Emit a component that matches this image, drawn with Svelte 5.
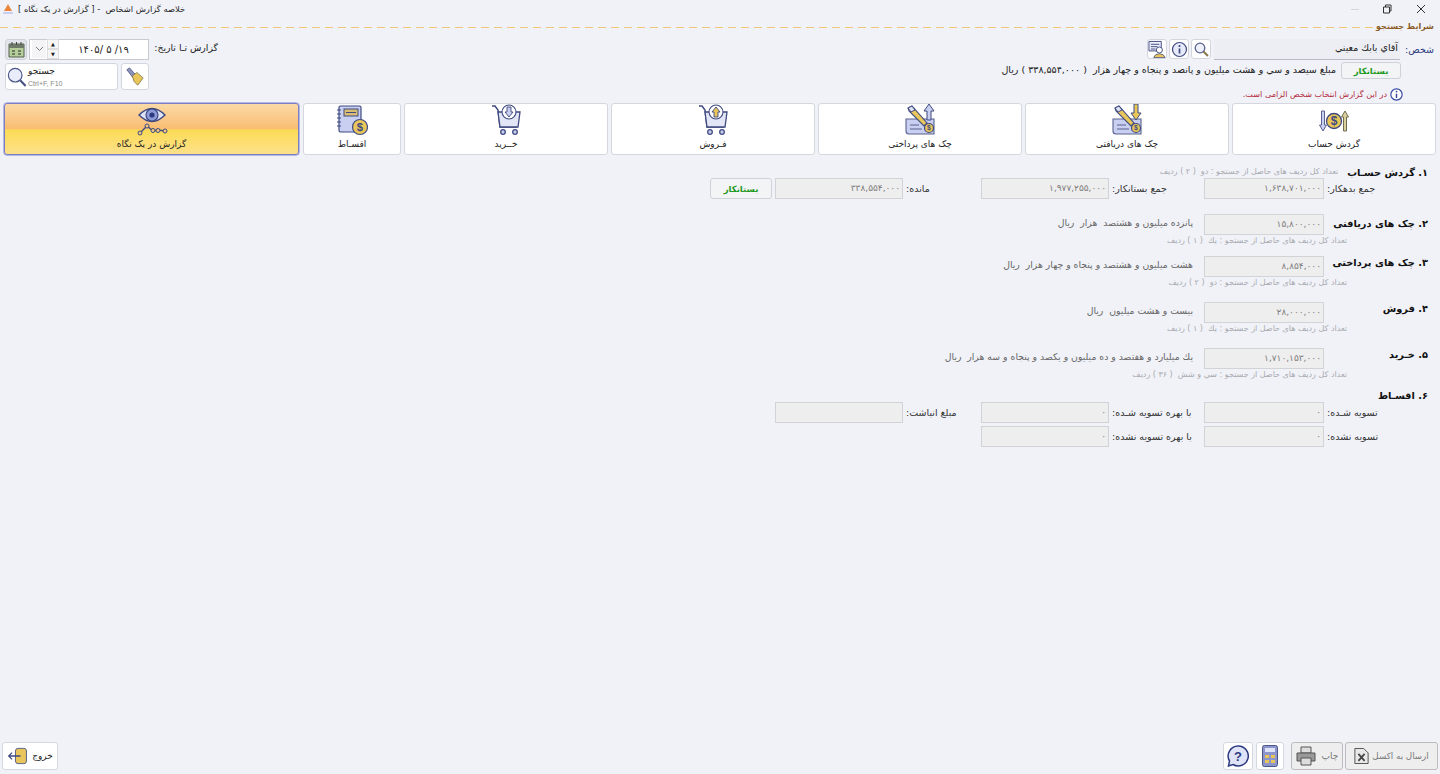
<script>
  const tabs = [
    { id: 'account', label: 'گردش حساب' },
    { id: 'checkIn', label: 'چک های دریافتی' },
    { id: 'checkOut', label: 'چک های پرداختی' },
    { id: 'sell', label: 'فـروش' },
    { id: 'buy', label: 'خــرید' },
    { id: 'loan', label: 'اقسـاط' },
    { id: 'eye', label: 'گزارش در یک نگاه', active: true }
  ];

  const reports = [
    { cls: 's2', title: '۲. چک های دریافتی', value: '۱۵,۸۰۰,۰۰۰', words: 'پانزده میلیون و هشتصد  هزار  ریال', hint: 'تعداد کل ردیف های حاصل از جستجو : یك  ( ۱ ) ردیف' },
    { cls: 's3', title: '۳. چک های پرداختی', value: '۸,۸۵۴,۰۰۰', words: 'هشت میلیون و هشتصد و پنجاه و چهار هزار  ریال', hint: 'تعداد کل ردیف های حاصل از جستجو : دو  ( ۲ ) ردیف' },
    { cls: '', title: '۴. فروش', value: '۲۸,۰۰۰,۰۰۰', words: 'بیست و هشت میلیون  ریال', hint: 'تعداد کل ردیف های حاصل از جستجو : یك  ( ۱ ) ردیف' },
    { cls: '', title: '۵. خـرید', value: '۱,۷۱۰,۱۵۳,۰۰۰', words: 'یك میلیارد و هفتصد و ده میلیون و یکصد و پنجاه و سه هزار  ریال', hint: 'تعداد کل ردیف های حاصل از جستجو : سي و شش  ( ۳۶ ) ردیف' }
  ];
</script>

{#snippet coin(cx, cy, r)}
  <circle {cx} {cy} {r} fill="#e8c65a" stroke="#3f4a80" stroke-width="1.2" />
  <text x={cx} y={cy + r * 0.55} text-anchor="middle" font-size={r * 1.5} font-family="Liberation Sans" font-weight="700" fill="#3f4a80">$</text>
{/snippet}

{#snippet checkIcon(up)}
  <svg class="tab-icon" viewBox="0 0 32 32" width="32" height="32">
    <path d="M2 15h28v15H5q-3 0-3-3z" fill="#c9cff0" stroke="#5a6390" stroke-width="1.1" />
    <path d="M6 21h9M6 25h12" stroke="#5a6390" />
    {@render coin(25, 24, 4.5)}
    <path d="M4 4l4-2 15 17-3 3L5 7z" fill="#e8c65a" stroke="#3f4a80" stroke-width="1.1" />
    <path d="M4 4l4-2 3 4-4 2z" fill="#dfe2f5" stroke="#3f4a80" />
    {#if up}
      <path d="M25 0l5 7h-3v9h-4V7h-3z" fill="#c9cff0" stroke="#3f4a80" />
    {:else}
      <path d="M23 0h4v9h3l-5 7-5-7h3z" fill="#e8c65a" stroke="#3f4a80" />
    {/if}
  </svg>
{/snippet}

{#snippet cartIcon(up)}
  <svg class="tab-icon" viewBox="0 0 32 32" width="32" height="32">
    <path d="M2 2h3l3 4 2 17h17" fill="none" stroke="#3f4a80" stroke-width="1.5" />
    <path d="M8 8h22l-2 15H10z" fill="#e3e6f7" stroke="#3f4a80" stroke-width="1.3" />
    <circle cx="19" cy="8" r="7" fill="#fff" stroke="#3f4a80" stroke-width="1.1" />
    {#if up}
      <path d="M19 3l4 5h-2v5h-4V8h-2z" fill="#e8c65a" stroke="#3f4a80" stroke-width=".9" />
    {:else}
      <path d="M17 3h4v5h2l-4 5-4-5h2z" fill="#c9cff0" stroke="#3f4a80" stroke-width=".9" />
    {/if}
    <circle cx="13" cy="28" r="2.3" fill="#c9cff0" stroke="#3f4a80" stroke-width="1.3" />
    <circle cx="25" cy="28" r="2.3" fill="#c9cff0" stroke="#3f4a80" stroke-width="1.3" />
  </svg>
{/snippet}

<div class="window">
  <div class="titlebar">
    <div class="controls">
      <svg width="12" height="12" viewBox="0 0 12 12"><path d="M2 2l8 8M10 2l-8 8" fill="none" stroke="#333" stroke-width="1" /></svg>
      <svg width="12" height="12" viewBox="0 0 12 12"><path d="M2.500 4h6v6h-6zM4.500 4V2h5.500v6H8.500" fill="none" stroke="#333" /></svg>
      <span class="minimize"></span>
    </div>
    <div class="title">
      <span>خلاصه گزارش اشخاص  - [ گزارش در یک نگاه ]</span>
      <svg width="12" height="12" viewBox="0 0 12 12"><path d="M6 1l4 7H2z" fill="#e8853a" /><path d="M1 9h10v2H1z" fill="#c9cff0" /></svg>
    </div>
  </div>

  <div class="legend">
    <span>شرایط جستجو</span>
    <i></i>
  </div>

  <div class="filters">
    <div class="person">
      <div class="person-row">
        <label for="person">شخص:</label>
        <div id="person" class="person-input">آقاي بابك معيني</div>
        <button class="mini" aria-label="search">
          <svg width="17" height="17" viewBox="0 0 17 17"><circle cx="7" cy="7" r="4.800" fill="#eef0fb" stroke="#5a6390" stroke-width="1.300" /><path d="M10.500 10.500l4.500 4.500" stroke="#8a7d55" stroke-width="2.200" /></svg>
        </button>
        <button class="mini" aria-label="info">
          <svg width="17" height="17" viewBox="0 0 17 17"><circle cx="8.500" cy="8.500" r="7" fill="#e7eafa" stroke="#3f4a80" stroke-width="1.200" /><path d="M8.500 7.500v5" stroke="#3f4a80" stroke-width="1.700" /><circle cx="8.500" cy="5" r="1.100" fill="#3f4a80" /></svg>
        </button>
        <button class="mini" aria-label="person details">
          <svg width="19" height="19" viewBox="0 0 19 19"><path d="M1 1h13v10H1z" fill="#eef0fb" stroke="#3f4a80" /><path d="M3 4h9M3 6.500h7M3 9h5" stroke="#3f4a80" /><circle cx="12" cy="10" r="3.200" fill="#fff" stroke="#3f4a80" /><path d="M6 18q1-4 6-4t6 4z" fill="#e8c65a" stroke="#3f4a80" stroke-width=".8" /></svg>
        </button>
      </div>
      <div class="balance-row">
        <button class="status wide">بستانکار</button>
        <span>مبلغ سیصد و سي و هشت میلیون و پانصد و پنجاه و چهار هزار  ( ۳۳۸,۵۵۴,۰۰۰ ) ریال</span>
      </div>
      <div class="notice">
        <svg width="13" height="13" viewBox="0 0 17 17"><circle cx="8.500" cy="8.500" r="7.400" fill="#fff" stroke="#3546a0" stroke-width="1.500" /><path d="M8.500 7.500v5.500" stroke="#3546a0" stroke-width="1.900" /><circle cx="8.500" cy="4.700" r="1.200" fill="#3546a0" /></svg>
        <span>در این گزارش انتخاب شخص الزامی است.</span>
      </div>
    </div>

    <div class="range">
      <div class="range-row">
        <span class="range-label">گزارش تـا تاریخ:</span>
        <div class="date">
          <span class="date-value" dir="ltr">۱۴۰۵/ ۵ /۱۹</span>
          <span class="spin"><b>▲</b><b>▼</b></span>
          <span class="drop">
            <svg width="9" height="6" viewBox="0 0 9 6"><path d="M1 1l3.500 3.500L8 1" fill="none" stroke="#777" /></svg>
          </span>
        </div>
        <button class="calendar" aria-label="calendar">
          <svg width="17" height="17" viewBox="0 0 17 17"><path d="M1 3h15v13H1z" fill="#b6cf9a" stroke="#55604f" /><path d="M1 3h15v4H1z" fill="#6d7a68" /><path d="M4 1v3M8.500 1v3M13 1v3" stroke="#444" /><path d="M4 10h3M10 10h3M4 13h3M10 13h3" stroke="#55604f" stroke-width="1.500" /></svg>
        </button>
      </div>
      <div class="action-row">
        <button class="brush" aria-label="clear">
          <svg width="20" height="20" viewBox="0 0 22 22"><path d="M2 3l3-2 7 8-3 3z" fill="#8d93b8" stroke="#3f4a80" stroke-width=".8" /><path d="M8 10l5-4 7 6-6 8q-5-3-6-10z" fill="#e8c65a" stroke="#6f6a40" stroke-width=".8" /></svg>
        </button>
        <button class="search">
          <svg width="20" height="22" viewBox="0 0 22 24"><circle cx="9" cy="10" r="7.500" fill="#e9edfb" stroke="#4a5488" stroke-width="1.300" /><path d="M14.500 15.500l6 6.500" stroke="#4a5488" stroke-width="2.400" /></svg>
          <span class="search-text">
            <span class="search-title">جستجو</span>
            <small>Ctrl+F, F10</small>
          </span>
        </button>
      </div>
    </div>
  </div>

  <nav class="tabs">
    {#each tabs as tab}
      <button class="tab" class:active={tab.active}>
        {#if tab.id === 'account'}
          <svg class="tab-icon" viewBox="0 0 32 32" width="32" height="32">
            <path d="M3.500 7h3v14h2l-3.500 6-3.500-6h2z" fill="#c9cff0" stroke="#5a6390" />
            <circle cx="16" cy="17" r="7.500" fill="#e8c65a" stroke="#3f4a80" stroke-width="1.300" />
            <text x="16" y="21" text-anchor="middle" font-size="12" font-family="Liberation Sans" font-weight="700" fill="#3f4a80">$</text>
            <path d="M25.500 27V13h-2l3.500-6 3.500 6h-2v14z" fill="#d9cf9a" stroke="#6f6a50" />
          </svg>
        {:else if tab.id === 'checkIn'}
          {@render checkIcon(false)}
        {:else if tab.id === 'checkOut'}
          {@render checkIcon(true)}
        {:else if tab.id === 'sell'}
          {@render cartIcon(true)}
        {:else if tab.id === 'buy'}
          {@render cartIcon(false)}
        {:else if tab.id === 'loan'}
          <svg class="tab-icon" viewBox="0 0 32 32" width="32" height="32">
            <rect x="3" y="2" width="22" height="26" rx="1.500" fill="#c9cff0" stroke="#3f4a80" stroke-width="1.200" />
            <path d="M1 6h4M1 10h4M1 14h4M1 18h4M1 22h4" stroke="#3f4a80" stroke-width="1.200" />
            <rect x="8" y="5" width="14" height="7" fill="#d8bd72" stroke="#3f4a80" />
            <path d="M10 8.500h10" stroke="#3f4a80" />
            {@render coin(24, 23, 7.500)}
          </svg>
        {:else}
          <svg class="tab-icon" viewBox="0 0 32 32" width="32" height="32">
            <path d="M3 11q13-13 26 0q-13 13-26 0z" fill="#dfe3f7" stroke="#3f4a80" stroke-width="1.400" />
            <circle cx="16" cy="11" r="6" fill="#8e9bd8" stroke="#3f4a80" stroke-width="1.200" />
            <circle cx="16" cy="11" r="2.600" fill="#2d3a80" />
            <path d="M4 29l7-7 6 5 5-1 7 1" fill="none" stroke="#3f4a80" stroke-width="1.300" />
            <circle cx="4" cy="29" r="2" fill="#f6c97c" stroke="#3f4a80" />
            <circle cx="11" cy="22" r="2" fill="#f6c97c" stroke="#3f4a80" />
            <circle cx="17" cy="26.500" r="2" fill="#f6c97c" stroke="#3f4a80" />
            <circle cx="22" cy="26.500" r="2" fill="#f6c97c" stroke="#3f4a80" />
            <circle cx="29" cy="27" r="2" fill="#f6c97c" stroke="#3f4a80" />
          </svg>
        {/if}
        <span>{tab.label}</span>
      </button>
    {/each}
  </nav>

  <main class="report">
    <section>
      <div class="head">
        <h2>۱. گردش حسـاب</h2>
        <span class="hint">تعداد کل ردیف های حاصل از جستجو : دو  ( ۲ ) ردیف</span>
      </div>
      <div class="fields">
        <span class="label">جمع بدهکار:</span>
        <div class="field">۱,۶۳۸,۷۰۱,۰۰۰</div>
        <span class="label">جمع بستانکار:</span>
        <div class="field">۱,۹۷۷,۲۵۵,۰۰۰</div>
        <span class="label">مانده:</span>
        <div class="field">۳۳۸,۵۵۴,۰۰۰</div>
        <span></span>
        <button class="status">بستانکار</button>
      </div>
    </section>

    {#each reports as item}
      <section class="fields {item.cls}">
        <h2>{item.title}</h2>
        <div class="field">{item.value}</div>
        <span class="words">{item.words}</span>
        <span class="hint row-hint">{item.hint}</span>
      </section>
    {/each}

    <section class="s3">
      <h2 class="plain">۶. اقسـاط</h2>
      <div class="fields stacked">
        <span class="label">تسویه شـده:</span>
        <div class="field">۰</div>
        <span class="label">با بهره تسویه شـده:</span>
        <div class="field">۰</div>
        <span class="label">مبلغ انباشت:</span>
        <div class="field"></div>
        <span class="label row-start">تسویه نشده:</span>
        <div class="field">۰</div>
        <span class="label">با بهره تسویه نشده:</span>
        <div class="field">۰</div>
      </div>
    </section>
  </main>

  <footer class="footer">
    <div class="footer-group">
      <button class="foot disabled excel">
        <span>ارسال به اکسل</span>
        <svg width="15" height="18" viewBox="0 0 17 19"><path d="M1 1h10l5 5v12H1z" fill="#e8e8e8" stroke="#444" /><path d="M5 7l7 8M12 7l-7 8" stroke="#444" stroke-width="2" /></svg>
      </button>
      <button class="foot disabled print">
        <span>چاپ</span>
        <svg width="20" height="20" viewBox="0 0 20 20"><path d="M5 1h10v6H5z" fill="#ddd" stroke="#555" /><path d="M1 7h18v8H1z" fill="#999" stroke="#555" /><path d="M5 12h10v7H5z" fill="#ddd" stroke="#555" /></svg>
      </button>
      <button class="foot square calc" aria-label="calculator">
        <svg width="16" height="22" viewBox="0 0 16 22"><rect x=".5" y=".5" width="15" height="21" rx="2" fill="#8d96cc" stroke="#4a5488" /><rect x="3" y="3" width="10" height="4" fill="#dfe3f7" /><path d="M3 10h4v3H3zM9 10h4v3H9zM3 15h4v3H3zM9 15h4v3H9z" fill="#e8c65a" /></svg>
      </button>
      <button class="foot square help" aria-label="help">
        <svg width="22" height="22" viewBox="0 0 22 22"><path d="M11 1a10 10 0 1 1-5 18.500L1.500 21l1-5A10 10 0 0 1 11 1z" fill="#dfe3f7" stroke="#2d3a80" stroke-width="1.500" /><text x="11" y="16" text-anchor="middle" font-size="13" font-weight="700" font-family="Liberation Sans" fill="#2d3a80">?</text></svg>
      </button>
    </div>
    <button class="foot exit">
      <span>خروج</span>
      <svg width="22" height="18" viewBox="0 0 26 20"><rect x="10" y="1" width="13" height="18" rx="3" fill="#e8c65a" stroke="#3f4a80" /><path d="M16 10H2M6 6l-4 4 4 4" fill="none" stroke="#3f4a80" stroke-width="1.500" /></svg>
    </button>
  </footer>
</div>

<style>
  :global(body) {
    background: #f0f2f8;
  }

  .window {
    direction: rtl;
    height: 774px;
    display: flex;
    flex-direction: column;
    overflow: hidden;
    background: #f0f2f8;
    color: #222;
    font-family: "DejaVu Sans", sans-serif;
    font-size: 9px;
  }

  button {
    font-family: inherit;
    color: inherit;
    cursor: pointer;
    padding: 0;
  }

  .titlebar {
    height: 18px;
    display: flex;
    justify-content: space-between;
    align-items: center;
    padding-left: 2px;
  }

  .controls {
    display: flex;
    align-items: center;
    gap: 22px;
    padding-right: 13px;
  }

  .minimize {
    width: 8px;
    height: 1px;
    background: #d5d7de;
  }

  .title {
    display: flex;
    align-items: center;
    gap: 4px;
    font-size: 8.400px;
    white-space: pre;
  }

  .legend {
    height: 16px;
    display: flex;
    align-items: center;
    gap: 1px;
    padding-right: 6px;
    color: #8a5a1e;
    font-weight: 700;
    font-size: 8px;
  }

  .legend i {
    flex: 1;
    height: 1px;
    margin-top: 3px;
    background: repeating-linear-gradient(to right, #efc67c 0 8px, transparent 8px 13px);
  }

  .filters {
    height: 65px;
    margin-top: 4px;
    display: flex;
    justify-content: space-between;
    padding: 0 6px 0 5px;
  }

  .person-row {
    display: flex;
    align-items: center;
    height: 22px;
  }

  .person-row label {
    width: 34px;
    color: #2c3a80;
    font-size: 9.500px;
  }

  .person-input {
    width: 184px;
    height: 20px;
    line-height: 18px;
    padding-right: 2px;
    margin-left: 3px;
    border-bottom: 1px solid #b9bcc6;
    background: #eceef3;
    white-space: nowrap;
    font-size: 9.500px;
  }

  .mini {
    width: 20px;
    height: 20px;
    margin-left: 2px;
    display: flex;
    align-items: center;
    justify-content: center;
    background: #fff;
    border: 1px solid #d4d6de;
    border-radius: 3px;
  }

  .balance-row {
    margin-top: 2px;
    padding-right: 33px;
    display: flex;
    align-items: center;
    gap: 5px;
    height: 17px;
    white-space: pre;
    font-size: 9.500px;
  }

  .balance-row span {
    margin-top: -3px;
  }

  .status {
    background: #f3f4f6;
    border: 1px solid #cfd1d8;
    border-radius: 3px;
    color: #1f9a1f;
    font-weight: 700;
    font-size: 8.500px;
  }

  .status.wide {
    width: 60px;
    height: 17px;
  }

  .notice {
    margin-top: 8px;
    padding-right: 31px;
    display: flex;
    align-items: center;
    gap: 3px;
    color: #b3283c;
    font-size: 8.100px;
    height: 14px;
  }

  .range {
    display: flex;
    flex-direction: column;
    gap: 3px;
  }

  .range-row {
    display: flex;
    align-items: center;
    gap: 2px;
    height: 22px;
  }

  .range-label {
    width: 67px;
    margin-top: -3px;
    white-space: nowrap;
    font-size: 9.300px;
  }

  .date {
    width: 120px;
    height: 21px;
    display: flex;
    align-items: center;
    background: #fff;
    border: 1px solid #c8cad2;
    box-sizing: border-box;
  }

  .date-value {
    flex: 1;
    text-align: center;
    direction: ltr;
    white-space: pre;
    font-size: 10px;
    letter-spacing: .5px;
  }

  .spin {
    width: 12px;
    height: 18px;
    display: flex;
    flex-direction: column;
    justify-content: center;
    background: #f6f6f6;
  }

  .spin b {
    display: block;
    text-align: center;
    font-size: 5px;
    line-height: 8px;
    font-weight: 400;
    border: 1px solid #ddd;
  }

  .drop {
    width: 14px;
    height: 18px;
    margin: 0 1px 0 2px;
    display: flex;
    align-items: center;
    justify-content: center;
    background: #f4f4f6;
  }

  .calendar {
    flex: none;
    width: 22px;
    height: 21px;
    display: flex;
    align-items: center;
    justify-content: center;
    background: #e3e5ec;
    border: 1px solid #cfd1d9;
    border-radius: 3px;
  }

  .action-row {
    display: flex;
    gap: 3px;
    padding-right: 69px;
    height: 27px;
  }

  .brush {
    width: 28px;
    display: flex;
    align-items: center;
    justify-content: center;
    background: #fff;
    border: 1px solid #d4d6de;
    border-radius: 3px;
  }

  .search {
    width: 113px;
    display: flex;
    direction: ltr;
    align-items: center;
    gap: 1px;
    padding-left: 1px;
    background: #fff;
    border: 1px solid #d4d6de;
    border-radius: 3px;
  }

  .search-text {
    display: flex;
    flex-direction: column;
    align-items: flex-start;
    gap: 3px;
  }

  .search-title {
    font-size: 9px;
    line-height: 11px;
  }

  .search small {
    font-family: "Liberation Sans", sans-serif;
    font-size: 7px;
    line-height: 8px;
    color: #888;
  }

  .tabs {
    display: grid;
    grid-template-columns: repeat(5, 204px) 98px 295px;
    gap: 3px;
    padding-right: 4px;
  }

  .tab {
    height: 52px;
    display: flex;
    flex-direction: column;
    align-items: center;
    background: #fff;
    border: 1px solid #d5d7df;
    border-radius: 3px;
    font-size: 9px;
  }

  .tab:last-child {
    width: 295px;
    margin-right: 1px;
  }

  .tab-icon {
    display: block;
    height: 32px;
  }

  .tab span {
    margin-top: 2px;
    line-height: 12px;
    white-space: nowrap;
  }

  .tab.active {
    border-color: #7a7ec6;
    box-shadow: 0 0 0 .5px #7a7ec6;
    background: linear-gradient(#fbd9a6, #f9bd74 49%, #fbdc56 52%, #fde08a);
  }

  .report {
    padding: 11px 12px 0 0;
    display: flex;
    flex-direction: column;
  }

  .report > section {
    margin-top: 13px;
  }

  .report > section:first-child {
    margin-top: 0;
  }

  .report > section.s2 {
    margin-top: 15px;
  }

  .report > section.s3 {
    margin-top: 9px;
  }

  .head {
    display: flex;
    align-items: center;
    gap: 9px;
    height: 12px;
  }

  h2 {
    margin: 0;
    font-size: 9.800px;
    line-height: 13px;
    font-weight: 700;
    color: #111;
    white-space: nowrap;
    align-self: start;
  }

  .head h2 {
    align-self: center;
  }

  h2.plain {
    height: 12px;
    line-height: 12px;
  }

  .fields {
    display: grid;
    grid-template-columns: 104px 120px 95px 128px 78px 128px 3px 62px;
    align-items: center;
  }

  .stacked {
    row-gap: 3px;
  }

  .s2 h2 {
    margin-top: 3px;
  }

  .label {
    text-align: left;
    padding-left: 3px;
    white-space: nowrap;
    color: #333;
    font-size: 9.500px;
  }

  .row-start {
    grid-column: 1;
  }

  .field {
    height: 21px;
    line-height: 19px;
    box-sizing: border-box;
    padding-right: 2px;
    border: 1px solid #d2d3d6;
    background: #eeeeee;
    color: #7d7d7d;
    font-size: 9px;
    white-space: nowrap;
  }

  .status:not(.wide) {
    height: 21px;
  }

  .words {
    grid-column: 3 / -1;
    padding-right: 11px;
    color: #666;
    white-space: pre;
    line-height: 12px;
    align-self: start;
    margin-top: 3px;
    font-size: 9.300px;
  }

  .hint {
    color: #a8a9ae;
    font-size: 8px;
    line-height: 12px;
    white-space: pre;
  }

  .row-hint {
    grid-column: 1 / -1;
    padding-right: 81px;
  }

  .footer {
    margin-top: auto;
    display: flex;
    justify-content: space-between;
    padding: 0 2px 4px;
  }

  .footer-group {
    display: flex;
  }

  .foot {
    height: 28px;
    display: flex;
    align-items: center;
    justify-content: center;
    border-radius: 3px;
    background: #fff;
    border: 1px solid #d6d8e0;
    font-size: 9px;
  }

  .foot.disabled {
    background: #eeeeee;
    border-color: #bcbcbc;
    color: #777;
  }

  .excel {
    width: 93px;
    gap: 3px;
    font-size: 8.700px;
  }

  .print {
    width: 52px;
    margin-right: 2px;
    gap: 6px;
  }

  .square {
    width: 28px;
  }

  .calc {
    margin-right: 7px;
  }

  .help {
    width: 30px;
    margin-right: 3px;
  }

  .exit {
    width: 56px;
    gap: 3px;
  }
</style>
